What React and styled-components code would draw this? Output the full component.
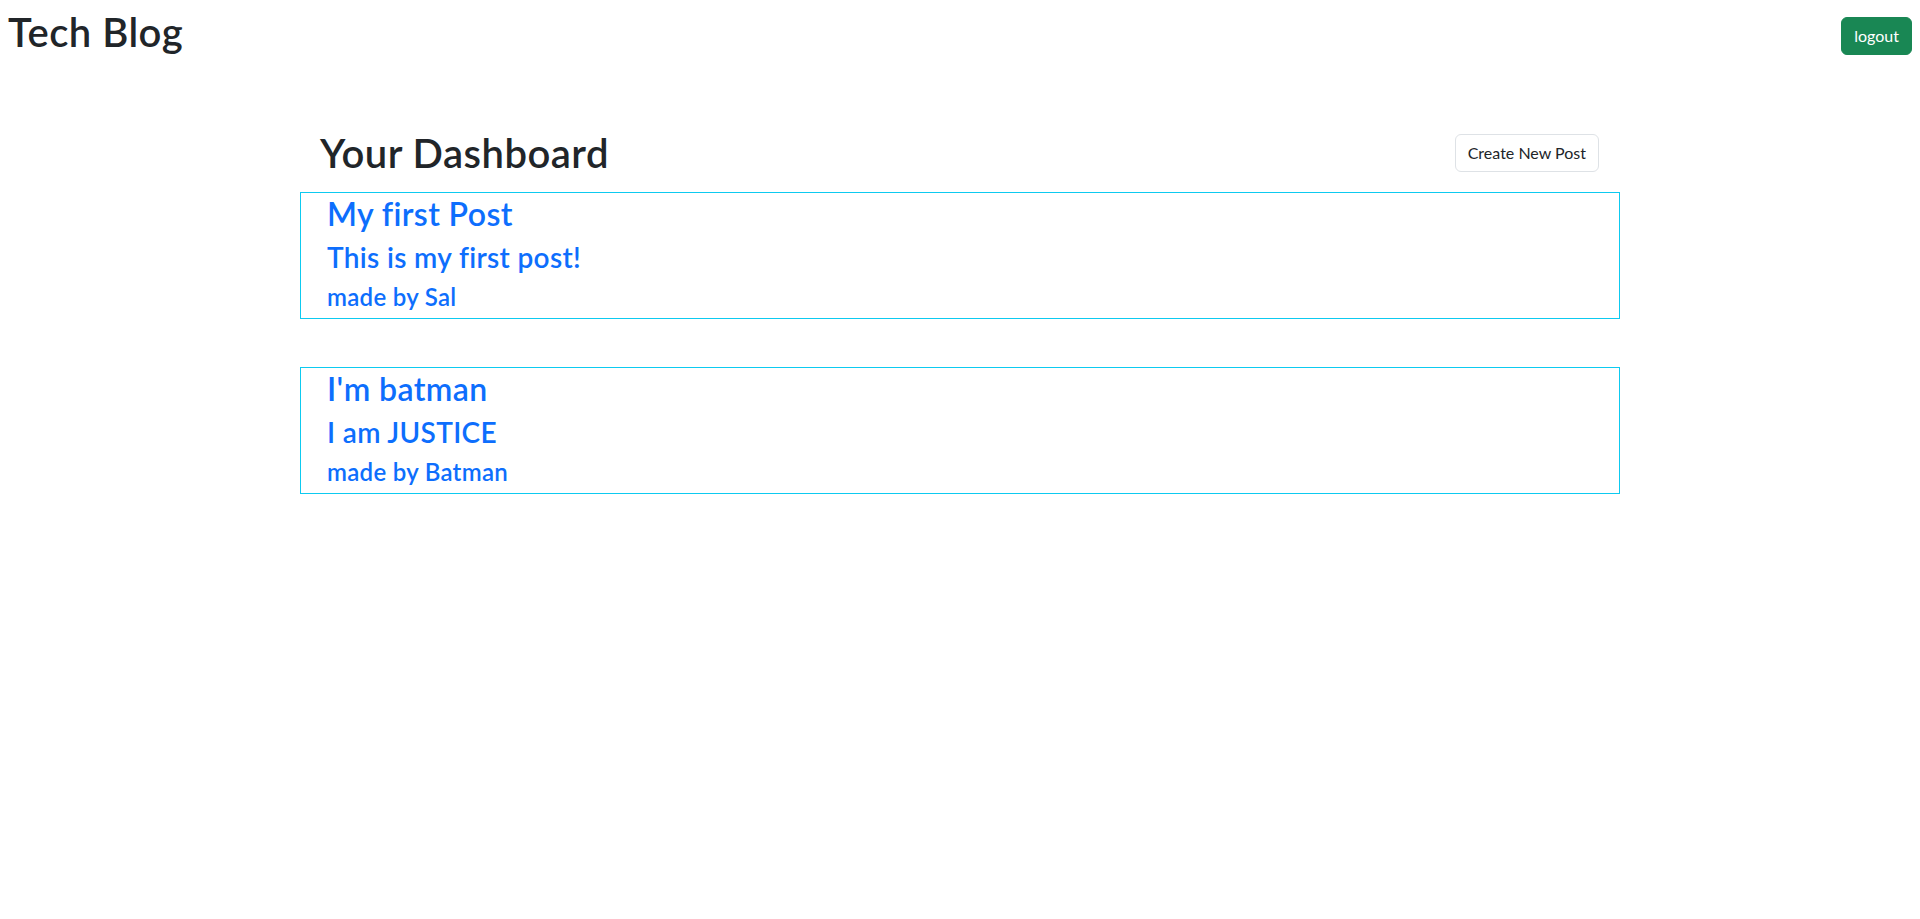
import React from 'react'
import styled, { createGlobalStyle } from 'styled-components'

const GlobalStyle = createGlobalStyle`
* { box-sizing: border-box; }
body {
  margin: 0;
  font-family: Lato, "Open Sans", sans-serif;
  font-size: 16px;
  line-height: 1.5;
  color: #212529;
  background: #fff;
}
h1, h2, h3, h4 {
  font-weight: 600;
  line-height: 1.2;
  letter-spacing: 0.012em;
}
`

const Header = styled.header`
display: flex;
justify-content: space-between;
align-items: center;
padding: 8px;
`
const Brand = styled.h1`
margin: 0 0 8px;
font-size: 40px;
`
const Button = styled.button`
font-family: inherit;
font-size: 16px;
line-height: 1.5;
padding: 6px 12px;
border-radius: 6px;
cursor: pointer;
border: 1px solid ${p => p.$light ? '#dee2e6' : '#198754'};
background: ${p => p.$light ? '#fff' : '#198754'};
color: ${p => p.$light ? '#212529' : '#fff'};
`
const Main = styled.main`
width: 1320px;
margin: 57px auto 0;
`
const TopRow = styled.div`
display: flex;
justify-content: space-between;
align-items: center;
padding: 0 21px 0 20px;
margin-bottom: 15px;
`
const PageTitle = styled.h1`
margin: 0;
font-size: 40px;
`
const PostCard = styled.div`
border: 1px solid #0dcaf0;
padding: 2px 0 0 26px;
margin-bottom: 48px;
color: #0d6efd;
`
const PostTitle = styled.h2`
margin: 0 0 8px;
font-size: 32px;
`
const PostBody = styled.h3`
margin: 0 0 8px;
font-size: 28px;
`
const PostAuthor = styled.h4`
margin: 0 0 6px;
font-size: 24px;
`

const posts = [
  { title: 'My first Post', body: 'This is my first post!', author: 'Sal' },
  { title: "I'm batman", body: 'I am JUSTICE', author: 'Batman' },
]

export default function App() {
  return (
    <>
      <GlobalStyle />
      <Header>
        <Brand>Tech Blog</Brand>
        <Button>logout</Button>
      </Header>
      <Main>
        <TopRow>
          <PageTitle>Your Dashboard</PageTitle>
          <Button $light>Create New Post</Button>
        </TopRow>
        {posts.map(post => (
          <PostCard key={post.title}>
            <PostTitle>{post.title}</PostTitle>
            <PostBody>{post.body}</PostBody>
            <PostAuthor>made by {post.author}</PostAuthor>
          </PostCard>
        ))}
      </Main>
    </>
  )
}
